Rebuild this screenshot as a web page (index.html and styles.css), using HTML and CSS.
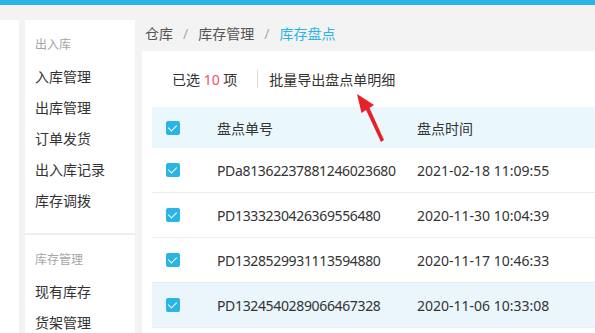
FILE: index.html
```html
<!DOCTYPE html>
<html lang="zh-CN">
<head>
  <meta charset="UTF-8">
  <title>库存盘点</title>
  <link rel="stylesheet" href="styles.css">
</head>
<body>
  <div class="topbar"></div>
  <div class="layout">
    <div class="rail"></div>
    <div class="sidebar">
      <div class="group">
        <div class="group-title">出入库</div>
        <div class="item">入库管理</div>
        <div class="item">出库管理</div>
        <div class="item">订单发货</div>
        <div class="item">出入库记录</div>
        <div class="item">库存调拨</div>
      </div>
      <div class="group">
        <div class="group-title">库存管理</div>
        <div class="item">现有库存</div>
        <div class="item">货架管理</div>
      </div>
    </div>
    <div class="main">
      <div class="crumbs">
        <span>仓库</span><span class="sep">/</span><span>库存管理</span><span class="sep">/</span><span class="current">库存盘点</span>
      </div>
      <div class="card">
        <div class="toolbar">
          <span class="selected">已选 <em>10</em> 项</span>
          <span class="divider"></span>
          <span class="action">批量导出盘点单明细</span>
          <svg class="arrow" width="40" height="60" viewBox="0 0 40 60">
            <polygon points="4,3 21,14 16.5,17 31,49 28,51 13,19 8.5,22" fill="#e8202a"/>
          </svg>
        </div>
        <table class="grid">
          <thead>
            <tr><th class="chk"><span class="box"></span></th><th class="no">盘点单号</th><th>盘点时间</th></tr>
          </thead>
          <tbody>
            <tr><td class="chk"><span class="box"></span></td><td class="code">PDa81362237881246023680</td><td>2021-02-18 11:09:55</td></tr>
            <tr><td class="chk"><span class="box"></span></td><td class="code">PD1333230426369556480</td><td>2020-11-30 10:04:39</td></tr>
            <tr><td class="chk"><span class="box"></span></td><td class="code">PD1328529931113594880</td><td>2020-11-17 10:46:33</td></tr>
            <tr class="hover"><td class="chk"><span class="box"></span></td><td class="code">PD1324540289066467328</td><td>2020-11-06 10:33:08</td></tr>
          </tbody>
        </table>
      </div>
    </div>
  </div>
</body>
</html>
```

FILE: styles.css
```css
body {
  margin: 0;
  background: #f3f3f3;
  font-family: "Noto Sans", "Noto Sans CJK SC", sans-serif;
  color: #333;
  height: 333px;
  overflow: hidden;
}

.topbar {
  height: 5px;
  background: #2bb5e5;
}

.layout {
  display: flex;
  padding-top: 15px;
  gap: 6px;
  height: 313px;
  overflow: hidden;
}

.rail {
  width: 19px;
  background: #fff;
}

.sidebar {
  width: 110px;
  background: #fff;
}

.group {
  padding: 15px 0 17px 10px;
}

.group + .group {
  border-top: 2px solid #eeeeee;
  padding-top: 15px;
}

.group-title {
  font-size: 12px;
  color: #a5a5a5;
  height: 22px;
  line-height: 20px;
  margin-bottom: 4px;
}

.item {
  font-size: 14px;
  height: 31px;
  line-height: 31px;
  color: #333;
}

.main {
  flex: 1;
  display: flex;
  flex-direction: column;
  padding-left: 1px;
}

.crumbs {
  height: 31px;
  line-height: 27px;
  font-size: 14px;
  color: #555;
  padding-left: 3px;
}

.crumbs .sep {
  color: #aaa;
  margin: 0 10px;
}

.crumbs .current {
  color: #2bb5e5;
}

.card {
  flex: 1;
  background: #fff;
  padding-left: 10px;
}

.toolbar {
  position: relative;
  height: 56px;
  display: flex;
  align-items: center;
  font-size: 14px;
  padding-left: 20px;
}

.selected em {
  font-style: normal;
  color: #f0506e;
}

.divider {
  width: 1px;
  height: 18px;
  background: #ddd;
  margin: 0 11px 0 20px;
}

.arrow {
  position: absolute;
  left: 201px;
  top: 40px;
}

.grid {
  width: 100%;
  border-collapse: collapse;
  font-size: 14px;
}

.grid th {
  background: #eaf8fd;
  font-weight: normal;
  text-align: left;
  height: 41px;
  padding: 0;
}

.grid td {
  height: 44px;
  padding: 0;
  border-bottom: 1px solid #ebeef5;
}

.grid tr.hover td {
  background: #eaf5fc;
}

.grid .chk {
  width: 51px;
  padding-left: 14px;
}

.grid .no,
.grid .code {
  width: 200px;
}

.grid .code {
  letter-spacing: -0.35px;
}

.box {
  display: block;
  width: 14px;
  height: 14px;
  border-radius: 2px;
  background: #2bb5e5;
  position: relative;
}

.box::after {
  content: "";
  position: absolute;
  left: 4px;
  top: 2px;
  width: 4px;
  height: 7px;
  border: solid #fff;
  border-width: 0 1.5px 1.5px 0;
  transform: rotate(45deg);
}
```
